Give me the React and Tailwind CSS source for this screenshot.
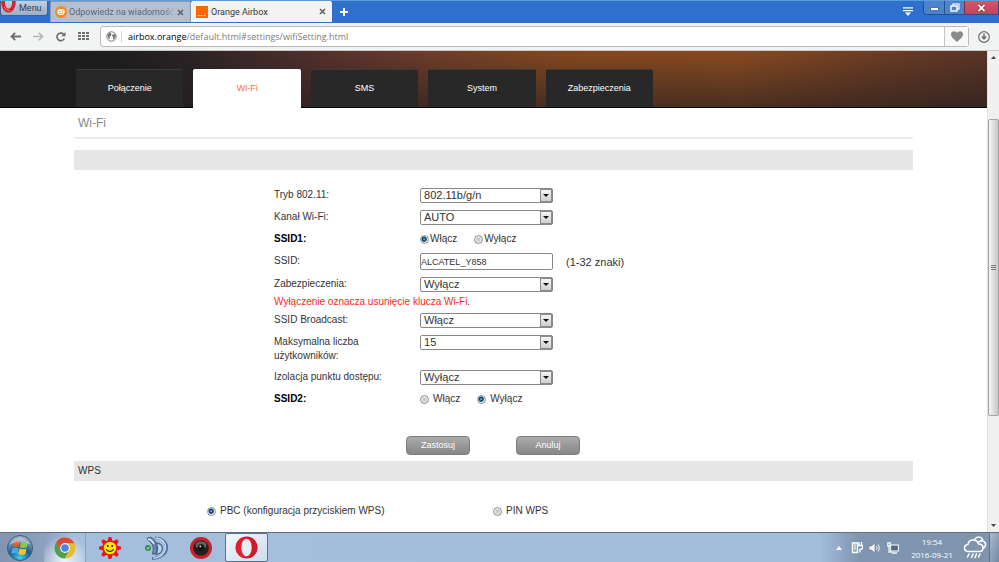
import React, { useState } from "react";

const radioClass =
  "appearance-none size-[9px] shrink-0 m-0 rounded-full border border-[#8e8f90] bg-[radial-gradient(circle,#c4c4c4_15%,#f4f4f4_75%)] checked:border-[#8594a0] checked:bg-[radial-gradient(circle_at_45%_45%,#5fb4e0_8%,#123a5c_30%,#1b4c70_42%,#e8eef2_56%)]";

function Radio({ name, value, current, onChange, tight, children }) {
  return (
    <label className={tight ? "flex items-center gap-px" : "flex items-center gap-1"}>
      <input type="radio" name={name} checked={current === value} onChange={() => onChange(value)} className={radioClass} />
      <span>{children}</span>
    </label>
  );
}

function Select({ id, options }) {
  return (
    <div className="relative w-[133px]">
      <select
        id={id}
        className="block w-full h-[15px] appearance-none rounded-[2px] border border-[#888] bg-white py-0 pl-[3px] pr-4 text-[11px] leading-[13px] text-[#333]"
      >
        {options.map((o) => (
          <option key={o}>{o}</option>
        ))}
      </select>
      <span className="pointer-events-none absolute inset-y-px right-px flex w-[12px] items-center justify-center border border-[#8b8b8b] bg-linear-to-b from-[#f6f6f6] to-[#cfcfcf]">
        <svg width="6" height="3" viewBox="0 0 6 3"><path d="M0 0h6L3 3z" fill="#111" /></svg>
      </span>
    </div>
  );
}

function Row({ label, htmlFor, bold, tall, children }) {
  return (
    <div className={tall ? "flex h-[35px] pt-1" : "flex h-[22px] pt-1"}>
      <label htmlFor={htmlFor} className={bold ? "w-[146px] shrink-0 font-bold text-black" : "w-[146px] shrink-0 pr-6"}>
        {label}
      </label>
      <div className={bold ? "flex h-[14px] items-center" : "flex h-[15px] items-center"}>{children}</div>
    </div>
  );
}

function OrangeFace() {
  return (
    <svg width="12" height="12" viewBox="0 0 12 12" className="shrink-0">
      <circle cx="6" cy="6" r="6" fill="#f58a1f" />
      <path d="M3 3.6Q6 2.2 9 3.6Q10.6 6 8.8 8.2Q6 10 3.2 8.2Q1.4 6 3 3.6z" fill="#fff" />
      <circle cx="4.6" cy="5.2" r=".8" fill="#f58a1f" />
      <circle cx="7.4" cy="5.2" r=".8" fill="#f58a1f" />
      <path d="M4 7q2 1.4 4 0" stroke="#f58a1f" strokeWidth=".8" fill="none" />
    </svg>
  );
}

function CloseIcon() {
  return (
    <svg width="7" height="7" viewBox="0 0 7 7"><path d="M1 1l5 5M6 1L1 6" stroke="#5c6066" strokeWidth="1.5" /></svg>
  );
}

function Tab({ icon, title, active }) {
  return (
    <div
      className={
        active
          ? "flex h-[21px] w-[141px] items-center gap-[3px] rounded-t-[2px] bg-[#f3f3f3] pl-[5px] pr-[6px] text-[#333]"
          : "flex h-[21px] w-[141px] items-center gap-[2px] rounded-t-[2px] border border-b-0 border-[#8b9bb3] bg-[#b4c0d2] pl-1 pr-[6px] text-[#5c6470]"
      }
    >
      {icon}
      <button className={active ? "flex-1 whitespace-nowrap text-left" : "flex-1 whitespace-nowrap text-left mask-r-from-90%"}>{title}</button>
      <button aria-label="Zamknij kartę"><CloseIcon /></button>
    </div>
  );
}

function TitleBar() {
  return (
    <div className="flex h-[23px] shrink-0 items-end border-t border-[#5b9bd8] bg-[#2e70cb] pb-px text-[9px] leading-[14px]">
      <button className="mr-[2px] flex h-[15px] w-[48px] items-start gap-[3px] self-start rounded-b-[3px] border border-t-0 border-[#4a5f80] bg-linear-to-b from-[#c3cee0] to-[#9badc8] text-[#333f52]">
        <svg width="15" height="12" viewBox="0 0 15 12" className="shrink-0">
          <ellipse cx="7.5" cy="2" rx="5.4" ry="7.6" fill="none" stroke="#d3232f" strokeWidth="3.6" />
          <path d="M3 6q2 4 6 3.6" stroke="#f08086" strokeWidth="1" fill="none" />
        </svg>
        <span>Menu</span>
      </button>
      <Tab icon={<OrangeFace />} title="Odpowiedz na wiadomość" />
      <Tab
        active
        icon={
          <svg width="12" height="12" viewBox="0 0 12 12" className="shrink-0">
            <rect width="12" height="12" fill="#ff6600" />
            <path d="M2 9.5h8" stroke="#ffd2b0" strokeWidth="1" strokeDasharray="1 .5" />
          </svg>
        }
        title="Orange Airbox"
      />
      <button aria-label="Nowa karta" className="flex h-5 w-[23px] items-center justify-center">
        <svg width="8" height="8" viewBox="0 0 8 8"><path d="M4 0v8M0 4h8" stroke="#fff" strokeWidth="2" /></svg>
      </button>
      <div className="ml-auto flex items-start self-start">
        <button aria-label="Karty" className="mr-[10px] pt-[6px]">
          <svg width="10" height="9" viewBox="0 0 10 9"><path d="M0 .8h10M0 3.6h10" stroke="#fff" strokeWidth="1.2" /><path d="M2 5.6h6L5 9z" fill="#fff" /></svg>
        </button>
        <div className="flex h-[14px] overflow-hidden rounded-bl-[4px] border border-t-0 border-[#274f8c]">
          <button aria-label="Minimalizuj" className="flex w-5 items-center justify-center bg-[#4d83cc]">
            <svg width="9" height="8" viewBox="0 0 9 8"><rect x=".5" y="3.5" width="8" height="3" rx=".5" fill="#fff" stroke="#31547f" strokeWidth=".7" /></svg>
          </button>
          <button aria-label="Przywróć" className="flex w-5 items-center justify-center border-l border-[#274f8c] bg-[#4d83cc]">
            <svg width="10" height="9" viewBox="0 0 10 9"><rect x="3" y="1" width="6" height="5" fill="none" stroke="#fff" strokeWidth="1.2" /><rect x="1" y="3" width="6" height="5" fill="#4d83cc" stroke="#fff" strokeWidth="1.4" /></svg>
          </button>
          <button aria-label="Zamknij" className="flex w-[34px] items-center justify-center border-l border-[#7c2c3f] bg-linear-to-b from-[#d0586a] to-[#c6425b]">
            <svg width="9" height="8" viewBox="0 0 9 8"><path d="M1.5 1l6 6M7.5 1l-6 6" stroke="#5d2634" strokeWidth="3" /><path d="M1.5 1l6 6M7.5 1l-6 6" stroke="#fff" strokeWidth="1.8" /></svg>
          </button>
        </div>
      </div>
    </div>
  );
}

function Toolbar() {
  return (
    <div className="flex h-7 shrink-0 items-center border-b border-[#c9c9c9] bg-[#f2f3f3] pl-[10px] pr-[9px]">
      <div className="flex w-[90px] items-center gap-3">
        <button aria-label="Wstecz"><svg width="11" height="9" viewBox="0 0 11 9"><path d="M11 4.5H1.5M5.2 .8L1.5 4.500 5.200 8.200" fill="none" stroke="#6e6e6e" strokeWidth="1.8" /></svg></button>
        <button aria-label="Dalej"><svg width="11" height="9" viewBox="0 0 11 9"><path d="M0 4.5h9.500M5.800 .8l3.700 3.700-3.700 3.700" fill="none" stroke="#b4b4b4" strokeWidth="1.600" /></svg></button>
        <button aria-label="Odśwież"><svg width="10" height="10" viewBox="0 0 10 10"><path d="M8.300 6.500A3.800 3.800 0 1 1 7.500 2.200" fill="none" stroke="#6e6e6e" strokeWidth="1.700" /><path d="M9.500 0v4.200H5.300z" fill="#6e6e6e" /></svg></button>
        <button aria-label="Szybkie wybieranie">
          <svg width="11" height="9" viewBox="0 0 11 9">
            {[0, 3, 6].map((y) => [0, 4, 8].map((x) => <rect key={x + "-" + y} x={x} y={y} width="3" height="2" fill="#6e6e6e" />))}
          </svg>
        </button>
      </div>
      <div className="flex h-[21px] flex-1 items-center rounded-[3px] border border-[#b9b9b9] bg-white">
        <button aria-label="Informacje o stronie" className="flex w-[21px] items-center justify-center border-r border-[#d0d0d0]">
          <svg width="11" height="11" viewBox="0 0 11 11"><circle cx="5.500" cy="5.500" r="4.700" fill="#fff" stroke="#777" /><path d="M2 3l2-1.500L5.500 3 5 5 3.500 5.500 4 7.500 3 8 1.500 5zM6.500 3.500L9 3l.8 2.500L8 8.500 7 8V6L6 5z" fill="#777" /></svg>
        </button>
        <div className="flex-1 pl-[6px] font-['Open_Sans','Noto_Sans',sans-serif] text-[9px] leading-4 text-[#7c7c7c]"><span className="text-black">airbox.orange</span>/default.html#settings/wifiSetting.html</div>
        <button aria-label="Zakładki" className="flex h-full w-[24px] items-center justify-center border-l border-[#c4c4c4] bg-[#f8f8f8]">
          <svg width="12" height="11" viewBox="0 0 12 11"><path d="M6 11C3 8.300 0 6.200 0 3.300 0 1.500 1.300.3 3 .3c1.300 0 2.400.7 3 1.800C6.600 1 7.700.3 9 .3c1.700 0 3 1.200 3 3C12 6.200 9 8.300 6 11z" fill="#8a8a8a" /></svg>
        </button>
      </div>
      <button aria-label="Pobrane" className="ml-[9px]">
        <svg width="12" height="12" viewBox="0 0 12 12"><circle cx="6" cy="6" r="5.300" fill="none" stroke="#6e6e6e" strokeWidth="1.200" /><path d="M6 2.500v5M3.800 5.600L6 8l2.200-2.400" fill="none" stroke="#6e6e6e" strokeWidth="1.500" /></svg>
      </button>
    </div>
  );
}

function PageHeader() {
  const items = ["Połączenie", "Wi-Fi", "SMS", "System", "Zabezpieczenia"];
  return (
    <header className="bg-[linear-gradient(to_bottom,transparent,rgba(30,28,30,0.600)),linear-gradient(to_right,#1c1c1c_0%,#1e1d1d_12%,#2c2425_20%,#55312c_33%,#6d3c2a_43%,#84481f_57%,#884a22_75%,#6b3b24_90%,#5a3426_100%)] pt-[18px] shadow-[inset_0_-1px_0_#000]">
      <div className="mx-auto w-[85%] pl-[2px]">
        <nav className="flex max-w-[577px] gap-[10px]">
          {items.map((t) => (
            <a
              key={t}
              href={"#" + t}
              className={
                t === "Wi-Fi"
                  ? "flex h-[39px] flex-1 items-center justify-center rounded-t-[2px] bg-white pb-[2px] text-[9px] text-[#ff6b35]"
                  : "flex h-[39px] flex-1 items-center justify-center rounded-t-[2px] border-b border-t border-b-black border-t-[#3a3a3a] bg-[#282828] pb-[2px] text-[9px] text-white"
              }
            >
              {t}
            </a>
          ))}
        </nav>
      </div>
    </header>
  );
}

function Page() {
  const [ssid1, setSsid1] = useState("on");
  const [ssid2, setSsid2] = useState("off");
  const [wps, setWps] = useState("pbc");
  const [ssid, setSsid] = useState("ALCATEL_Y858");
  const button =
    "h-[19px] w-[64px] rounded-[4px] border border-[#7d7d7d] bg-linear-to-b from-[#acacac] to-[#868686] text-[9px] leading-[17px] text-white";
  return (
    <div className="min-w-0 flex-1 overflow-hidden bg-white font-['Liberation_Sans',Arial,sans-serif] text-[10px] leading-[14px] text-[#333]">
      <PageHeader />
      <main className="mx-auto w-[85%]">
        <h1 className="flex h-[31px] items-center border-b-2 border-[#ebebeb] pl-1 text-[12px] text-[#888]">Wi-Fi</h1>
        <div className="mt-[11px] h-5 bg-[#e6e6e6]" />
        <form className="pl-[200px] pt-[14px]">
          <Row label="Tryb 802.11:" htmlFor="mode"><Select id="mode" options={["802.11b/g/n"]} /></Row>
          <Row label="Kanał Wi-Fi:" htmlFor="channel"><Select id="channel" options={["AUTO"]} /></Row>
          <Row label="SSID1:" bold>
            <div className="flex gap-[17px]">
              <Radio tight name="ssid1" value="on" current={ssid1} onChange={setSsid1}>Włącz</Radio>
              <Radio tight name="ssid1" value="off" current={ssid1} onChange={setSsid1}>Wyłącz</Radio>
            </div>
          </Row>
          <div className="flex h-[23px] items-center">
            <label htmlFor="ssid" className="w-[146px] shrink-0 pb-[2px]">SSID:</label>
            <input
              id="ssid"
              value={ssid}
              onChange={(e) => setSsid(e.target.value)}
              className="h-[17px] w-[133px] rounded-[2px] border border-[#888] bg-white p-0 text-[9px] leading-[13px] text-[#333]"
            />
            <span className="ml-[13px] text-[11px]">(1-32 znaki)</span>
          </div>
          <Row label="Zabezpieczenia:" htmlFor="security"><Select id="security" options={["Wyłącz"]} /></Row>
          <p className="text-[#ff1e1e]">Wyłączenie oznacza usunięcie klucza Wi-Fi.</p>
          <Row label="SSID Broadcast:" htmlFor="broadcast"><Select id="broadcast" options={["Włącz"]} /></Row>
          <Row tall label="Maksymalna liczba użytkowników:" htmlFor="max"><Select id="max" options={["15"]} /></Row>
          <Row label="Izolacja punktu dostępu:" htmlFor="isolation"><Select id="isolation" options={["Wyłącz"]} /></Row>
          <Row label="SSID2:" bold>
            <div className="flex gap-[17px]">
              <Radio name="ssid2" value="on" current={ssid2} onChange={setSsid2}>Włącz</Radio>
              <Radio name="ssid2" value="off" current={ssid2} onChange={setSsid2}>Wyłącz</Radio>
            </div>
          </Row>
          <div className="flex gap-[46px] pl-[132px] pt-[26px]">
            <button type="button" className={button}>Zastosuj</button>
            <button type="button" className={button}>Anuluj</button>
          </div>
        </form>
        <h2 className="mt-[6px] flex h-5 items-center bg-[#e6e6e6] pl-1">WPS</h2>
        <div className="flex pl-[133px] pt-[23px]">
          <div className="w-[286px]">
            <Radio name="wps" value="pbc" current={wps} onChange={setWps}>PBC (konfiguracja przyciskiem WPS)</Radio>
          </div>
          <Radio name="wps" value="pin" current={wps} onChange={setWps}>PIN WPS</Radio>
        </div>
      </main>
    </div>
  );
}

function Scrollbar() {
  return (
    <div className="flex w-3 shrink-0 flex-col items-center border-l border-[#e2e2e2] bg-[#f0f0f0]">
      <svg width="5" height="3" viewBox="0 0 5 3" className="mt-[5px] shrink-0"><path d="M0 3h5L2.500 0z" fill="#444" /></svg>
      <div className="min-h-0 flex-60" />
      <div className="flex min-h-0 w-full flex-296 items-center justify-center rounded-[2px] border border-[#a3a3a3] bg-linear-to-r from-[#f5f5f5] to-[#c6c7ca]">
        <svg width="5" height="6" viewBox="0 0 5 6"><path d="M0 .5h5M0 2.500h5M0 4.500h5" stroke="#777" /></svg>
      </div>
      <div className="min-h-0 flex-108" />
      <svg width="5" height="3" viewBox="0 0 5 3" className="mb-[5px] shrink-0"><path d="M0 0h5L2.500 3z" fill="#444" /></svg>
    </div>
  );
}

function StartOrb() {
  return (
    <svg width="26" height="26" viewBox="0 0 26 26">
      <defs>
        <radialGradient id="orb" cx=".5" cy=".9" r=".85"><stop offset="0" stopColor="#3fd0f5" /><stop offset=".5" stopColor="#175f96" /><stop offset="1" stopColor="#9fb6c9" /></radialGradient>
      </defs>
      <circle cx="13" cy="13" r="12.500" fill="url(#orb)" stroke="#3c5876" />
      <path d="M7 7q3-2 6.300-.5l-1.300 5.600q-3-1.300-6.400.4z" fill="#ec5b29" />
      <path d="M14.200 7q3 1.500 7-.3l-1.400 5.600q-3.300 1.800-7 .2z" fill="#8cc63e" />
      <path d="M5.200 13.500q3.200-1.800 6.500-.4l-1.300 5.500q-3.200-1.400-6.500.4z" fill="#48a7e8" />
      <path d="M12.600 13.600q3.300 1.500 7-.2l-1.400 5.500q-3.300 1.800-7 .2z" fill="#fbc624" />
      <path d="M2.500 9.500Q13-4 23.500 9.500 13 5 2.500 9.500z" fill="#fff" opacity=".35" />
    </svg>
  );
}

function ChromeIcon() {
  return (
    <svg width="22" height="22" viewBox="0 0 22 22">
      <circle cx="11" cy="11" r="10.500" fill="#e6bd2e" />
      <path d="M1.900 5.800A10.500 10.500 0 0 1 20.300 6.200H11L6.900 13.400z" fill="#d94a3c" />
      <path d="M1.900 5.800L6.900 13.400 11 16l3.500-1.500L10.500 21.500A10.500 10.500 0 0 1 1.900 5.800z" fill="#4aa054" />
      <circle cx="11" cy="11" r="4.900" fill="#f4f4f4" />
      <circle cx="11" cy="11" r="3.800" fill="#4c86dc" />
    </svg>
  );
}

function SunIcon() {
  return (
    <svg width="22" height="22" viewBox="0 0 22 22">
      {[0, 45, 90, 135, 180, 225, 270, 315].map((a) => (
        <path key={a} d="M9.700 0h2.600l1.700 6h-6z" fill="#e8141c" transform={"rotate(" + a + " 11 11)"} />
      ))}
      <circle cx="11" cy="11" r="7" fill="#ffe500" stroke="#e8141c" strokeWidth="1.400" />
      <circle cx="8.800" cy="9" r="1" fill="#222" /><circle cx="13.200" cy="9" r="1" fill="#222" />
      <path d="M7.300 12.300q3.700 4.200 7.400 0" fill="none" stroke="#222" strokeWidth="1.100" />
    </svg>
  );
}

function TeamSpeakIcon() {
  return (
    <svg width="24" height="24" viewBox="0 0 24 24">
      <path d="M3 2.500q4-3 7 1 3.500 5 2.500 14l-4 .5q2-8-1.500-11z" fill="#6d8bb0" stroke="#41608a" strokeWidth="1" />
      <path d="M11 2C27 2 27 22 8 22.500" fill="none" stroke="#4a6b95" strokeWidth="2.600" />
      <path d="M11.500 2.200C26 3 25 21 9 22.200" fill="none" stroke="#d4e1ef" strokeWidth="1.200" />
      <path d="M12 7c9 0 8 11 0 11.500 2-4 2-8 0-11.500z" fill="#c4d3e5" stroke="#4a6b95" strokeWidth="1.400" />
      <path d="M4 3q3.500.5 6 5" fill="none" stroke="#e4edf6" strokeWidth="1.400" />
      <circle cx="4" cy="12" r="3" fill="#2f8f45" />
      <path d="M2.600 12l1.200 1.200L5.600 10.600" fill="none" stroke="#d8f5dc" />
    </svg>
  );
}

function CameraIcon() {
  return (
    <svg width="22" height="22" viewBox="0 0 22 22">
      <circle cx="11" cy="11" r="11" fill="#c9202b" />
      <circle cx="11" cy="11" r="7.800" fill="#251f20" />
      <ellipse cx="11" cy="8" rx="5.500" ry="3.800" fill="#777" opacity=".75" />
      <circle cx="11" cy="10.500" r="3.200" fill="#111" />
      <circle cx="10.300" cy="9.300" r=".9" fill="#eee" />
    </svg>
  );
}

function Taskbar() {
  return (
    <div className="flex h-[30px] shrink-0 items-stretch border-t border-[#606f80] bg-[linear-gradient(to_right,#8195b0_0px,#8da2bf_45px,#a6bedd_75px,#a3bddc_82%,#7f95b0_86%,#8094ae_100%)]">
      <button aria-label="Start" className="flex w-[39px] items-center justify-center"><StartOrb /></button>
      <div className="flex items-stretch">
        <button aria-label="Chrome" className="ml-1 flex w-[43px] items-center justify-center border-x border-[#8ba2bf] bg-[radial-gradient(circle_at_bottom,#eef5fb,transparent_75%)]"><ChromeIcon /></button>
        <button aria-label="Pogoda" className="flex w-12 items-center justify-center"><SunIcon /></button>
        <button aria-label="TeamSpeak" className="flex w-[43px] items-center justify-center"><TeamSpeakIcon /></button>
        <button aria-label="Kamera" className="flex w-12 items-center justify-center"><CameraIcon /></button>
        <button aria-label="Opera" className="flex w-[43px] items-center justify-center rounded-[2px] border border-[#5e7389] bg-linear-to-br from-[#f2f7fc] to-[#cddced]">
          <svg width="23" height="23" viewBox="0 0 23 23">
            <circle cx="11.500" cy="11.500" r="11" fill="#e0202c" />
            <path d="M11.500 22.500a11 11 0 0 0 0-22q5 2 5.500 8 .5 8-5.500 14z" fill="#a90d1c" opacity=".3" />
            <ellipse cx="11.500" cy="11.500" rx="5.200" ry="8.800" fill="#e6eef7" />
          </svg>
        </button>
      </div>
      <div className="ml-auto flex items-center font-['Open_Sans','Noto_Sans',sans-serif] text-[8px] leading-[13px] text-white">
        <button aria-label="Ukryte ikony" className="mr-[9px]"><svg width="6" height="4" viewBox="0 0 6 4" className="block"><path d="M0 4h6L3 0z" fill="#fff" /></svg></button>
        <div className="flex items-center gap-[6px]">
          <svg width="12" height="13" viewBox="0 0 12 13"><path d="M1.500 2h5v9.500h-5z" fill="#8fa1b7" stroke="#fff" strokeWidth="1.400" /><path d="M3 4h2M3 6h2M3 8h2" stroke="#fff" /><path d="M8 1v3M10.500 1v3M6.500 4.500h5v2q0 2-2.500 2v3" fill="none" stroke="#fff" strokeWidth="1.300" /></svg>
          <svg width="12" height="12" viewBox="0 0 12 12"><path d="M0 4h2.500L6 1v10L2.500 8H0z" fill="#f2f5f8" stroke="#51637a" strokeWidth=".5" /><path d="M7.500 4q1.300 2 0 4M9.300 2.500q2.300 3.500 0 7" fill="none" stroke="#e7edf3" /></svg>
          <svg width="12" height="12" viewBox="0 0 12 12"><rect x="3.500" y="3" width="8" height="6" fill="#586b83" stroke="#e7edf3" strokeWidth="1.200" /><path d="M5 11h5M.8 1v3h2.500V1zM2 4v6h3" fill="none" stroke="#f2f5f8" strokeWidth="1.300" /></svg>
        </div>
        <div className="ml-3 w-[42px] whitespace-nowrap text-center"><div>19:54</div><div>2016-09-21</div></div>
        <svg width="24" height="23" viewBox="0 0 24 23" className="ml-[10px]">
          <g fill="none" stroke="#fff" strokeWidth="1.500" strokeLinecap="round">
            <path d="M5 15.500Q1.500 15 1.500 12T5 8.500Q5.500 4 10 4t5.500 4Q20 8 20 11.800T16.500 15.500z" />
            <path d="M12 3q2.500-3 6-1.300Q20 3 19.700 5 23 6 22.500 9T20 12M16 6q1-1.500 3.500-1" />
            <path d="M6 18l-1.500 3M10 18l-1.500 3.500M13.500 18L12 21.500M17 18l-1.500 3" />
          </g>
        </svg>
        <button aria-label="Pokaż pulpit" className="ml-[2px] h-full w-[10px] border-l border-[#5f7288] bg-linear-to-br from-[#a9bacd] to-[#7489a3]" />
      </div>
    </div>
  );
}

export default function App() {
  return (
    <div lang="pl" className="flex h-screen flex-col overflow-hidden font-['Roboto','Noto_Sans',sans-serif]">
      <TitleBar />
      <Toolbar />
      <div className="flex min-h-0 flex-1">
        <Page />
        <Scrollbar />
      </div>
      <Taskbar />
    </div>
  );
}
